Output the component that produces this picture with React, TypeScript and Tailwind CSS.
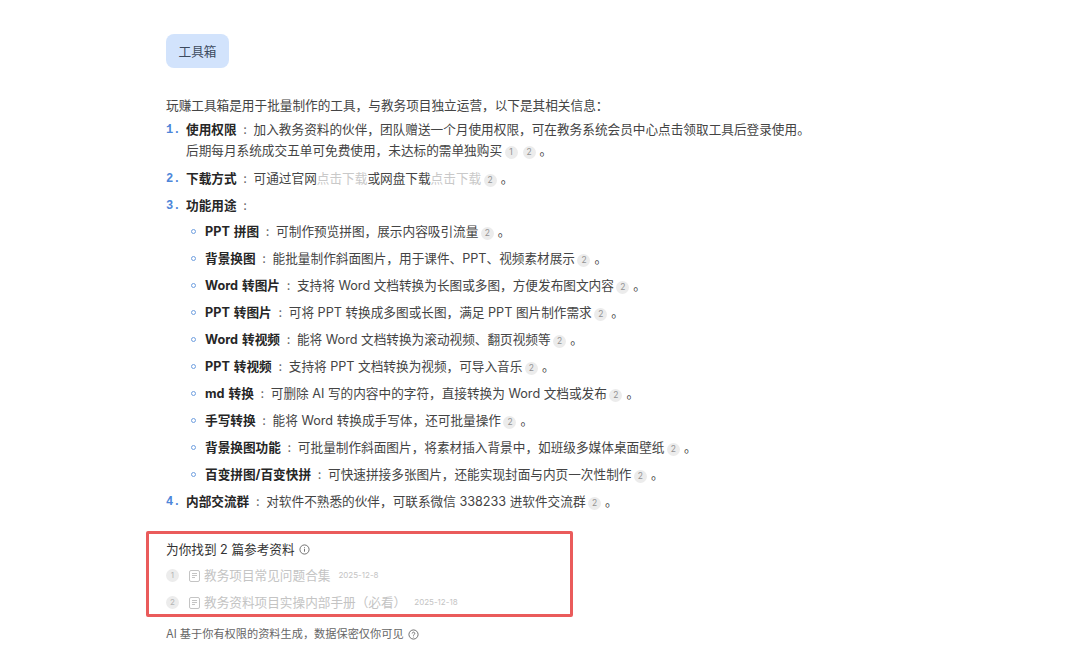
import React from 'react';

const tools: [string, string][] = [
  ['PPT 拼图', '可制作预览拼图，展示内容吸引流量'],
  ['背景换图', '能批量制作斜面图片，用于课件、PPT、视频素材展示'],
  ['Word 转图片', '支持将 Word 文档转换为长图或多图，方便发布图文内容'],
  ['PPT 转图片', '可将 PPT 转换成多图或长图，满足 PPT 图片制作需求'],
  ['Word 转视频', '能将 Word 文档转换为滚动视频、翻页视频等'],
  ['PPT 转视频', '支持将 PPT 文档转换为视频，可导入音乐'],
  ['md 转换', '可删除 AI 写的内容中的字符，直接转换为 Word 文档或发布'],
  ['手写转换', '能将 Word 转换成手写体，还可批量操作'],
  ['背景换图功能', '可批量制作斜面图片，将素材插入背景中，如班级多媒体桌面壁纸'],
  ['百变拼图/百变快拼', '可快速拼接多张图片，还能实现封面与内页一次性制作'],
];

function Cite({ n }: { n: number }) {
  return (
    <span className="inline-flex items-center justify-center w-[13px] h-[13px] mx-[2.5px] rounded-full bg-[#ececec] text-[8.5px] leading-none text-[#939393] align-[0px]">
      {n}
    </span>
  );
}

function End() {
  return <span className="ml-[1.5px]">。</span>;
}

function Label({ children }: { children: React.ReactNode }) {
  return (
    <>
      <b className="font-bold text-[#262626] [word-spacing:1px]">{children}</b>
      <span className="inline-block w-[17px] text-center leading-none text-[#666]">:</span>
    </>
  );
}

function Num({ n }: { n: number }) {
  return <span className="w-5 shrink-0 pt-[1px] font-['Liberation_Mono',monospace] text-[12px] font-bold text-[#4d86d9]">{n}.</span>;
}

function DocIcon() {
  return (
    <svg width="12" height="12" viewBox="0 0 12 12" fill="none" stroke="#c4c4c4" strokeWidth="1" className="shrink-0">
      <rect x="0.5" y="0.5" width="10" height="11" rx="1.5" />
      <path d="M3 3.5h5M3 5.5h5M3 7.5h3" />
    </svg>
  );
}

function Ref({ n, title, date }: { n: number; title: string; date: string }) {
  return (
    <div className="flex items-center h-[27px] text-[#c4c4c4]">
      <span className="flex items-center justify-center w-[13px] h-[13px] rounded-full bg-[#ececec] text-[8px] text-[#b5b5b5]">{n}</span>
      <span className="ml-[10px] mr-[3px]"><DocIcon /></span>
      <span>{title}</span>
      <span className="ml-2 text-[8px]">{date}</span>
    </div>
  );
}

export default function App() {
  return (
    <div className="h-[671px] overflow-hidden bg-white pl-[166px] pt-[34px] text-[12.65px] leading-[21px] text-[#444] font-['Inter','Noto_Sans_CJK_SC',sans-serif]">
      <div className="flex items-center justify-center w-[63px] h-[34px] rounded-lg bg-[#d2e3fc] text-[#3c4a5e]">工具箱</div>

      <p className="mt-[27px]">玩赚工具箱是用于批量制作的工具，与教务项目独立运营，以下是其相关信息：</p>

      <ol className="mt-[3px] flex flex-col gap-[6px]">
        <li className="mb-[1px] flex">
          <Num n={1} />
          <div>
            <div className="h-[21px]"><Label>使用权限</Label>加入教务资料的伙伴，团队赠送一个月使用权限，可在教务系统会员中心点击领取工具后登录使用。</div>
            <div className="h-[21px]">后期每月系统成交五单可免费使用，未达标的需单独购买<Cite n={1} /><Cite n={2} /><End /></div>
          </div>
        </li>
        <li className="flex h-[21px]">
          <Num n={2} />
          <div><Label>下载方式</Label>可通过官网<span className="text-[#c9c9c9]">点击下载</span>或网盘下载<span className="text-[#c9c9c9]">点击下载</span><Cite n={2} /><End /></div>
        </li>
        <li className="mb-[-1px] flex h-[21px]">
          <Num n={3} />
          <div><Label>功能用途</Label></div>
        </li>
        {tools.map(([name, desc]) => (
          <li key={name} className="flex h-[21px] pl-[20px]">
            <span className="flex w-[19px] shrink-0 items-center">
              <span className="ml-[5px] h-[5px] w-[5px] rounded-full border border-[#6f9fdf]" />
            </span>
            <div><Label>{name}</Label>{desc}<Cite n={2} /><End /></div>
          </li>
        ))}
        <li className="flex h-[21px]">
          <Num n={4} />
          <div><Label>内部交流群</Label>对软件不熟悉的伙伴，可联系微信 338233 进软件交流群<Cite n={2} /><End /></div>
        </li>
      </ol>

      <div className="relative mt-[22px] w-[400px]">
        <div className="absolute left-[-20px] top-[-3px] w-[427px] h-[86px] border-[3px] border-[#ea5b5b] rounded-[2px]" />
        <div className="flex items-center h-[28px] pt-[3px] text-[#333]">
          为你找到 2 篇参考资料
          <svg width="11" height="11" viewBox="0 0 12 12" fill="none" stroke="#666" className="ml-[4px]">
            <circle cx="6" cy="6" r="5" />
            <path d="M6 5.2v3.2M6 3.4v.8" />
          </svg>
        </div>
        <Ref n={1} title="教务项目常见问题合集" date="2025-12-8" />
        <Ref n={2} title="教务资料项目实操内部手册（必看）" date="2025-12-18" />
      </div>

      <div className="mt-[8px] flex items-center text-[11.2px] text-[#666]">
        AI 基于你有权限的资料生成，数据保密仅你可见
        <svg width="11" height="11" viewBox="0 0 12 12" fill="none" stroke="#666" className="ml-[4px]">
          <circle cx="6" cy="6" r="5" />
          <path d="M4.6 4.8a1.4 1.4 0 1 1 2.2 1.2c-.5.3-.8.6-.8 1.2M6 8.4v.8" />
        </svg>
      </div>
    </div>
  );
}
